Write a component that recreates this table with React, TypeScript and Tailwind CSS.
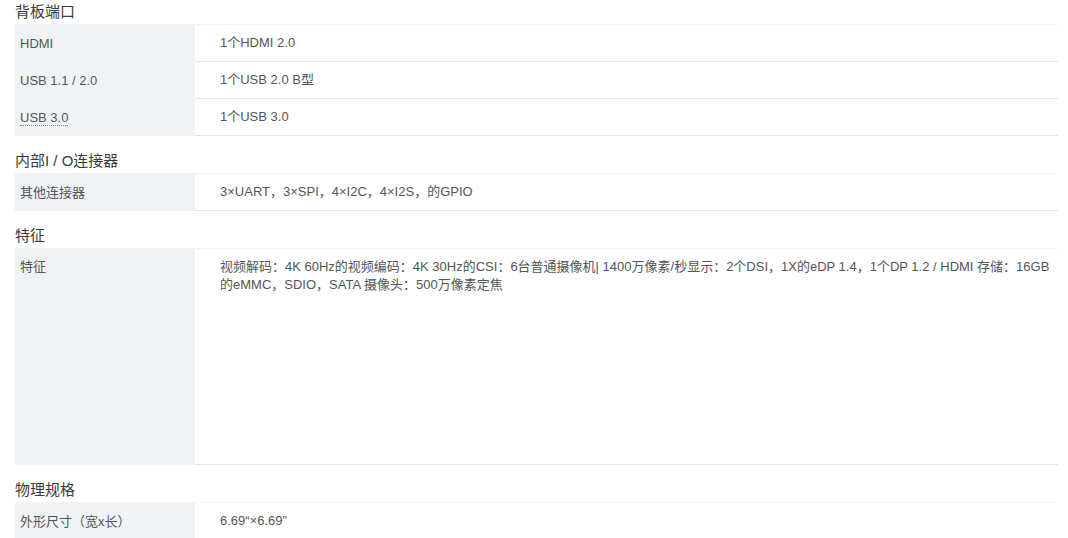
import React from "react";

interface SpecRow {
  label: string;
  value: React.ReactNode;
  abbr?: boolean;
  tall?: boolean;
}

interface SpecSection {
  title: string;
  rows: SpecRow[];
}

const sections: SpecSection[] = [
  {
    title: "背板端口",
    rows: [
      { label: "HDMI", value: "1个HDMI 2.0" },
      { label: "USB 1.1 / 2.0", value: "1个USB 2.0 B型" },
      { label: "USB 3.0", value: "1个USB 3.0", abbr: true },
    ],
  },
  {
    title: "内部I / O连接器",
    rows: [
      { label: "其他连接器", value: "3×UART，3×SPI，4×I2C，4×I2S，的GPIO" },
    ],
  },
  {
    title: "特征",
    rows: [
      {
        label: "特征",
        tall: true,
        value: (
          <>
            视频解码：4K 60Hz的视频编码：4K 30Hz的CSI：6台普通摄像机| 1400万像素/秒显示：2个DSI，1X的eDP 1.4，1个DP 1.2 / HDMI 存储：16GB
            <br />
            的eMMC，SDIO，SATA 摄像头：500万像素定焦
          </>
        ),
      },
    ],
  },
  {
    title: "物理规格",
    rows: [{ label: "外形尺寸（宽x长）", value: "6.69“×6.69”" }],
  },
];

export default function App() {
  return (
    <div
      className="w-[1068px] h-[538px] overflow-hidden bg-white pl-[15px] pr-[10px]"
      style={{ fontFamily: '"Liberation Sans", Arial, "Noto Sans CJK SC", sans-serif' }}
    >
      {sections.map((section, i) => (
        <div key={section.title} className={i === 0 ? "" : "mt-[13px]"}>
          <div className="h-[25px] text-[15px] leading-[24px] text-[#3a3a3a] border-b border-[#f2f2f2]">
            {section.title}
          </div>
          {section.rows.map((row) => (
            <div
              key={row.label}
              className={`flex text-[13px] text-[#555] ${row.tall ? "h-[216px]" : "h-[37px]"}`}
            >
              <div
                className={`w-[180px] shrink-0 bg-[#f0f3f6] pl-[5px] flex ${
                  row.tall ? "items-start pt-[9px] leading-[18px]" : "items-center"
                }`}
              >
                {row.abbr ? (
                  <span className="border-b border-dotted border-[#888] leading-[15px]">{row.label}</span>
                ) : (
                  row.label
                )}
              </div>
              <div
                className={`flex-1 pl-[25px] pr-[6px] border-b border-[#e6e6e6] flex ${
                  row.tall ? "items-start pt-[9px] leading-[18px]" : "items-center"
                }`}
              >
                <div>{row.value}</div>
              </div>
            </div>
          ))}
        </div>
      ))}
    </div>
  );
}
